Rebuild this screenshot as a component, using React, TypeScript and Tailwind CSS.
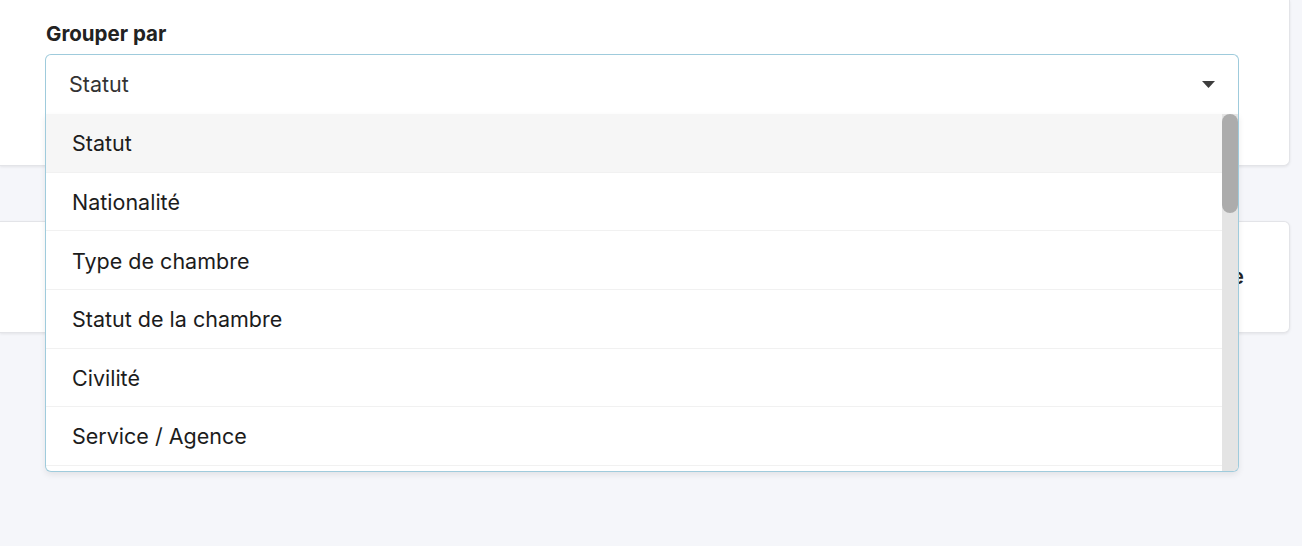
const options = [
  'Statut',
  'Nationalité',
  'Type de chambre',
  'Statut de la chambre',
  'Civilité',
  'Service / Agence',
];

export default function App() {
  const selected = 'Statut';

  return (
    <div
      className="relative h-[546px] w-[1302px] overflow-hidden bg-[#f5f6fa] text-[#222]"
      style={{ fontFamily: 'Inter, "Noto Sans", sans-serif' }}
    >
      <div className="flex w-[1290px] flex-col gap-[55px]">
        {/* Filter card */}
        <div className="h-[166px] rounded-br-md border-b border-r border-[#e3e4e8] bg-white px-[46px] pt-[21px] shadow-[0_1px_3px_rgba(0,0,0,0.08)]">
          <div className="relative">
            <label className="block text-[20.5px] leading-[26px] font-bold text-[#222]">Grouper par</label>
            <div className="mt-[7px] w-[1194px] -ml-px">
              <button className="flex h-[60px] w-full items-center justify-between rounded-t-md border border-b-0 border-[#9fcbdc] bg-white pl-[23px] pr-[22px] text-left">
                <span className="text-[21.5px] text-[#333]">{selected}</span>
                <svg width="13" height="7" viewBox="0 0 13 7" className="mr-[1px]">
                  <path d="M0 0h13L6.5 7z" fill="#3d3d3d" />
                </svg>
              </button>

              {/* Open dropdown list */}
              <div className="absolute left-[-1px] top-[93px] z-10 flex h-[358px] w-[1194px] overflow-hidden rounded-b-md border border-t-0 border-[#9fcbdc] bg-white shadow-[0_3px_6px_rgba(0,0,0,0.08)]">
                <ul className="flex-1">
                  {options.map((opt) => (
                    <li
                      key={opt}
                      className={`flex h-[58.67px] items-center border-b border-[#f1f1f1] pl-[26px] pt-[1px] text-[21.5px] text-[#1c1c1c] ${
                        opt === selected ? 'bg-[#f6f6f6]' : 'bg-white'
                      }`}
                    >
                      {opt}
                    </li>
                  ))}
                </ul>
                <div className="w-[16px] bg-[#e4e4e4]">
                  <div className="h-[99px] rounded-full bg-[#acacac]" />
                </div>
              </div>
            </div>
          </div>
        </div>

        {/* Summary card */}
        <div className="flex h-[112px] items-center justify-end rounded-r-md border border-l-0 border-[#e3e4e8] bg-white pr-[45px] shadow-[0_1px_3px_rgba(0,0,0,0.08)]">
          <span className="text-[21px] font-semibold text-[#222]">Répartition par statut de la réservation globale</span>
        </div>
      </div>
    </div>
  );
}
